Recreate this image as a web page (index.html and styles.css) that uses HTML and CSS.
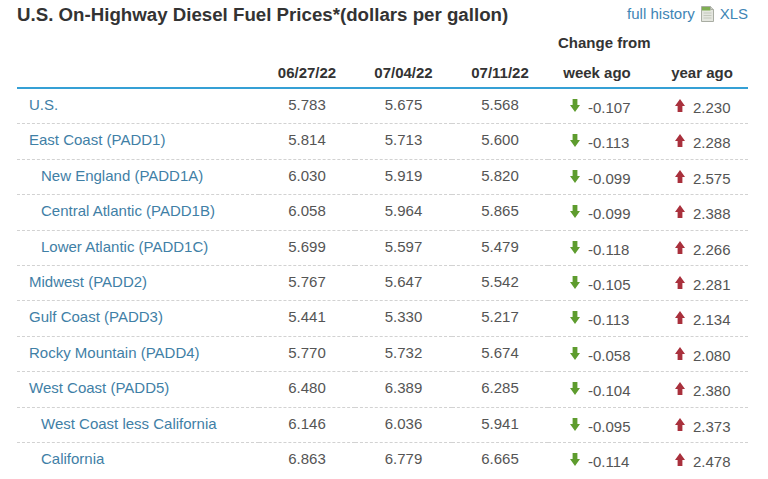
FILE: index.html
```html
<!DOCTYPE html>
<html lang="en">
<head>
<meta charset="utf-8">
<title>U.S. On-Highway Diesel Fuel Prices</title>
<link rel="stylesheet" href="styles.css">
</head>
<body>
<div class="page">
  <div class="topbar">
    <h1 class="title">U.S. On-Highway Diesel Fuel Prices*(dollars per gallon)</h1>
    <div class="links">
      <a class="link" href="#">full history</a>
      <svg class="xls-icon" width="15" height="18" viewBox="0 0 15 18" aria-hidden="true">
        <path d="M1.5 1.5h9l3 3v12h-12z" fill="#e4e6df" stroke="#a9ada3" stroke-width="1"/>
        <rect x="2" y="2" width="8.5" height="3.5" fill="#7fae52"/>
        <path d="M10.5 1.5v3h3" fill="#cfd3c8" stroke="#a9ada3" stroke-width="1"/>
        <path d="M3.5 8h8M3.5 10.5h8M3.5 13h8" stroke="#c4c8bd" stroke-width="1"/>
      </svg>
      <a class="link" href="#">XLS</a>
    </div>
  </div>
  <table class="prices">
    <colgroup>
      <col class="c-label"><col class="c-num1"><col class="c-num2"><col class="c-num3"><col class="c-week"><col class="c-year">
    </colgroup>
    <thead>
      <tr class="head-top">
        <th></th><th></th><th></th><th></th>
        <th class="change-from" colspan="2">Change from</th>
      </tr>
      <tr class="head-main">
        <th></th>
        <th>06/27/22</th>
        <th>07/04/22</th>
        <th>07/11/22</th>
        <th>week ago</th>
        <th class="year-h">year ago</th>
      </tr>
    </thead>
    <tbody id="rows"></tbody>
  </table>
</div>
<script src="script.js"></script>
</body>
</html>
```

FILE: script.js
```javascript
var data = [
  ["U.S.", 0, "5.783", "5.675", "5.568", "-0.107", "2.230"],
  ["East Coast (PADD1)", 0, "5.814", "5.713", "5.600", "-0.113", "2.288"],
  ["New England (PADD1A)", 1, "6.030", "5.919", "5.820", "-0.099", "2.575"],
  ["Central Atlantic (PADD1B)", 1, "6.058", "5.964", "5.865", "-0.099", "2.388"],
  ["Lower Atlantic (PADD1C)", 1, "5.699", "5.597", "5.479", "-0.118", "2.266"],
  ["Midwest (PADD2)", 0, "5.767", "5.647", "5.542", "-0.105", "2.281"],
  ["Gulf Coast (PADD3)", 0, "5.441", "5.330", "5.217", "-0.113", "2.134"],
  ["Rocky Mountain (PADD4)", 0, "5.770", "5.732", "5.674", "-0.058", "2.080"],
  ["West Coast (PADD5)", 0, "6.480", "6.389", "6.285", "-0.104", "2.380"],
  ["West Coast less California", 1, "6.146", "6.036", "5.941", "-0.095", "2.373"],
  ["California", 1, "6.863", "6.779", "6.665", "-0.114", "2.478"]
];
var down = '<svg class="arrow" width="10" height="13" viewBox="0 0 10 13"><path d="M2.6 0h4.8v6H10l-5 7-5-7h2.6z" fill="#5e9c2e"/></svg>';
var up = '<svg class="arrow" width="10" height="13" viewBox="0 0 10 13"><path d="M5 0l5 7H7.4v6H2.6V7H0z" fill="#a9303c"/></svg>';
var html = "";
data.forEach(function (r) {
  html += '<tr>' +
    '<td class="label' + (r[1] ? ' sub' : '') + '"><a href="#">' + r[0] + '</a></td>' +
    '<td class="num">' + r[2] + '</td>' +
    '<td class="num">' + r[3] + '</td>' +
    '<td class="num">' + r[4] + '</td>' +
    '<td class="chg week">' + (r[5].charAt(0) === "-" ? down : up) + r[5] + '</td>' +
    '<td class="chg year">' + (r[6].charAt(0) === "-" ? down : up) + r[6] + '</td>' +
    '</tr>';
});
document.getElementById("rows").innerHTML = html;
```

FILE: styles.css
```css
html, body {
  margin: 0;
  padding: 0;
  background: #ffffff;
}
body {
  font-family: "Liberation Sans", Arial, sans-serif;
  color: #555555;
}
.page {
  padding-left: 17px;
  width: 731px;
}
.topbar {
  display: flex;
  justify-content: space-between;
  align-items: center;
  height: 30px;
}
.title {
  margin: 0;
  font-size: 18.7px;
  font-weight: bold;
  color: #333333;
  line-height: 30px;
  white-space: nowrap;
}
.links {
  display: flex;
  align-items: center;
  font-size: 15px;
  line-height: 30px;
  padding-bottom: 2px;
}
.link {
  color: #3e85b5;
  text-decoration: none;
}
.xls-icon {
  display: block;
  margin: 0 5px 0 5px;
}
.prices {
  width: 731px;
  table-layout: fixed;
  border-collapse: separate;
  border-spacing: 0;
  font-size: 15px;
}
.c-label { width: 242px; }
.c-num1 { width: 96px; }
.c-num2 { width: 97px; }
.c-num3 { width: 96px; }
.c-week { width: 98px; }
.c-year { width: 102px; }
th {
  font-weight: bold;
  color: #333333;
  padding: 0;
  text-align: center;
  vertical-align: top;
  line-height: 19px;
}
.head-top th {
  height: 26px;
  padding-top: 3px;
  box-sizing: border-box;
}
.change-from {
  text-align: left;
  padding-left: 10px;
}
.head-main th {
  padding-top: 7px;
  padding-bottom: 5px;
  border-bottom: 2px solid #35a0d5;
}
.head-main .year-h {
  padding-left: 10px;
}
td {
  padding: 0;
  vertical-align: top;
  border-bottom: 1px dashed #d2d2d2;
  white-space: nowrap;
}
tbody tr:last-child td {
  border-bottom: none;
}
.label {
  padding-left: 12px;
  line-height: 32.4px;
  padding-bottom: 2px;
}
.label.sub {
  padding-left: 24px;
}
.label a {
  color: #3f80a6;
  text-decoration: none;
}
.num {
  text-align: center;
  line-height: 32.4px;
  padding-bottom: 2px;
}
.chg {
  text-align: left;
  line-height: 30.4px;
  padding-top: 4px;
}
.week {
  padding-left: 22px;
}
.year {
  padding-left: 29px;
}
.arrow {
  display: inline-block;
  vertical-align: 1px;
  margin-right: 8px;
}
```
